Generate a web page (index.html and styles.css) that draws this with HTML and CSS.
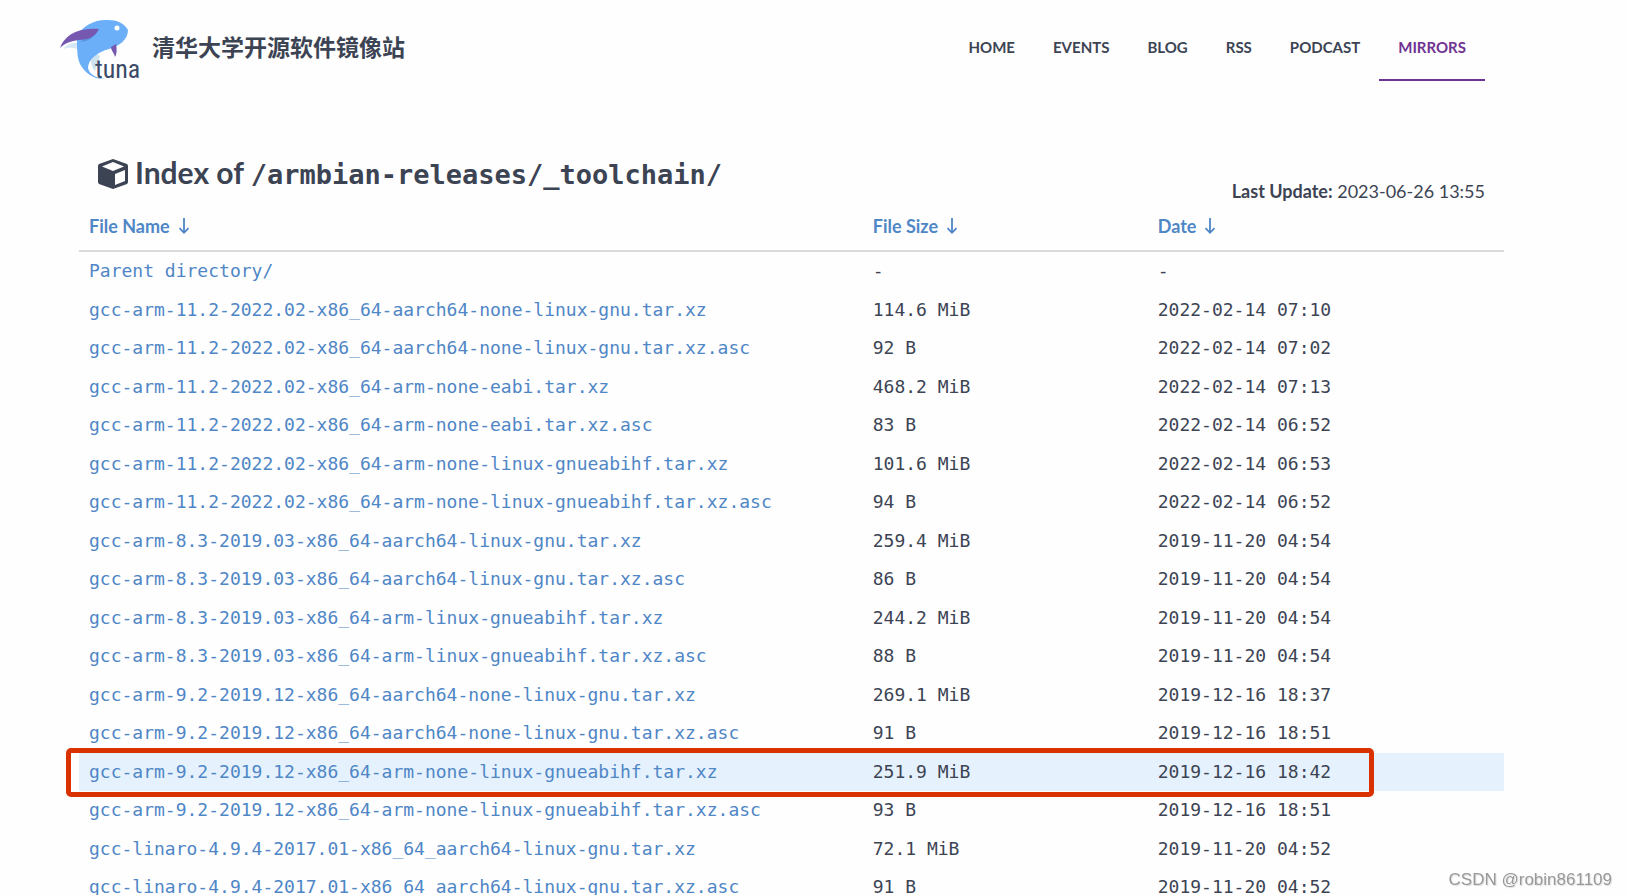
FILE: index.html
```html
<!DOCTYPE html>
<html lang="zh-CN">
<head>
<meta charset="utf-8">
<title>Index of /armbian-releases/_toolchain/</title>
<link rel="stylesheet" href="styles.css">
</head>
<body>
<svg class="defs" aria-hidden="true">
  <symbol id="arrow-down" viewBox="0 0 12 18"><path d="M6 1v14.5M1.5 11.2L6 15.8l4.500-4.600" fill="none" stroke="currentColor" stroke-width="1.800"/></symbol>
</svg>
<header class="site-header">
  <a class="brand" href="#">
    <svg class="logo" viewBox="0 0 84 64" role="img" aria-label="tuna">
      <path d="M3 31C8 25 15 24 20 25L17 31C12 29 7 30 3 31Z" fill="#d5e8f3"/>
      <path d="M33 34C30 40 30 48 35 53L40 38Z" fill="#cfe3ef"/>
      <path d="M17 18C23 7 36 1 48 2C57 2 64 5 68 12C68 22 59 28 49 31C38 34 28 41 28 50C29 55 34 60 46 61C34 62 25 55 20 46C17 39 17 32 17 18Z" fill="#6caff9"/>
      <path d="M20 24C27 24 34 20 39 11L36 12C31 18 24 21 20 24Z" fill="#5a94da"/>
      <path d="M0 30C4 18 17 9 39 11C34 21 27 21 19 22C11 23 5 25 0 30Z" fill="#7658b1"/>
      <path d="M51 29L56 26C57 31 57 36 55 39C54 34 51 33 51 29Z" fill="#7658b1"/>
      <circle cx="57" cy="10" r="2.500" fill="#fff"/>
      <text class="logo-word" x="35" y="60">tuna</text>
    </svg>
    <span class="brand-name">清华大学开源软件镜像站</span>
  </a>
  <nav class="nav">
    <a href="#">HOME</a>
    <a href="#">EVENTS</a>
    <a href="#">BLOG</a>
    <a href="#">RSS</a>
    <a href="#">PODCAST</a>
    <a class="active" href="#">MIRRORS</a>
  </nav>
</header>
<main class="content">
  <div class="title-row">
    <h1 class="title">
      <svg class="cube" viewBox="0 0 32 32" aria-hidden="true"><path fill="#3c4454" fill-rule="evenodd" d="M16 1L30 6Q31 7 31 8V24Q31 25 30 26L16 31L2 26Q1 25 1 24V8Q1 7 2 6ZM16 4L5 8.500L16 13L27 8.500ZM18 16V27L28 23V12Z"/></svg>
      <span>Index of <span class="path">/armbian-releases/_toolchain/</span></span>
    </h1>
    <p class="updated"><strong>Last Update:</strong> 2023-06-26 13:55</p>
  </div>
  <table class="files">
    <thead>
      <tr>
        <th class="col-name"><a href="#">File Name<svg class="arrow" aria-hidden="true"><use href="#arrow-down"/></svg></a></th>
        <th class="col-size"><a href="#">File Size<svg class="arrow" aria-hidden="true"><use href="#arrow-down"/></svg></a></th>
        <th class="col-date"><a href="#">Date<svg class="arrow" aria-hidden="true"><use href="#arrow-down"/></svg></a></th>
      </tr>
    </thead>
    <tbody>
      <tr><td><a href="#">Parent directory/</a></td><td>-</td><td>-</td></tr>
      <tr><td><a href="#">gcc-arm-11.2-2022.02-x86_64-aarch64-none-linux-gnu.tar.xz</a></td><td>114.6 MiB</td><td>2022-02-14 07:10</td></tr>
      <tr><td><a href="#">gcc-arm-11.2-2022.02-x86_64-aarch64-none-linux-gnu.tar.xz.asc</a></td><td>92 B</td><td>2022-02-14 07:02</td></tr>
      <tr><td><a href="#">gcc-arm-11.2-2022.02-x86_64-arm-none-eabi.tar.xz</a></td><td>468.2 MiB</td><td>2022-02-14 07:13</td></tr>
      <tr><td><a href="#">gcc-arm-11.2-2022.02-x86_64-arm-none-eabi.tar.xz.asc</a></td><td>83 B</td><td>2022-02-14 06:52</td></tr>
      <tr><td><a href="#">gcc-arm-11.2-2022.02-x86_64-arm-none-linux-gnueabihf.tar.xz</a></td><td>101.6 MiB</td><td>2022-02-14 06:53</td></tr>
      <tr><td><a href="#">gcc-arm-11.2-2022.02-x86_64-arm-none-linux-gnueabihf.tar.xz.asc</a></td><td>94 B</td><td>2022-02-14 06:52</td></tr>
      <tr><td><a href="#">gcc-arm-8.3-2019.03-x86_64-aarch64-linux-gnu.tar.xz</a></td><td>259.4 MiB</td><td>2019-11-20 04:54</td></tr>
      <tr><td><a href="#">gcc-arm-8.3-2019.03-x86_64-aarch64-linux-gnu.tar.xz.asc</a></td><td>86 B</td><td>2019-11-20 04:54</td></tr>
      <tr><td><a href="#">gcc-arm-8.3-2019.03-x86_64-arm-linux-gnueabihf.tar.xz</a></td><td>244.2 MiB</td><td>2019-11-20 04:54</td></tr>
      <tr><td><a href="#">gcc-arm-8.3-2019.03-x86_64-arm-linux-gnueabihf.tar.xz.asc</a></td><td>88 B</td><td>2019-11-20 04:54</td></tr>
      <tr><td><a href="#">gcc-arm-9.2-2019.12-x86_64-aarch64-none-linux-gnu.tar.xz</a></td><td>269.1 MiB</td><td>2019-12-16 18:37</td></tr>
      <tr><td><a href="#">gcc-arm-9.2-2019.12-x86_64-aarch64-none-linux-gnu.tar.xz.asc</a></td><td>91 B</td><td>2019-12-16 18:51</td></tr>
      <tr class="selected"><td><a href="#">gcc-arm-9.2-2019.12-x86_64-arm-none-linux-gnueabihf.tar.xz</a><span class="marker"></span></td><td>251.9 MiB</td><td>2019-12-16 18:42</td></tr>
      <tr><td><a href="#">gcc-arm-9.2-2019.12-x86_64-arm-none-linux-gnueabihf.tar.xz.asc</a></td><td>93 B</td><td>2019-12-16 18:51</td></tr>
      <tr><td><a href="#">gcc-linaro-4.9.4-2017.01-x86_64_aarch64-linux-gnu.tar.xz</a></td><td>72.1 MiB</td><td>2019-11-20 04:52</td></tr>
      <tr><td><a href="#">gcc-linaro-4.9.4-2017.01-x86_64_aarch64-linux-gnu.tar.xz.asc</a></td><td>91 B</td><td>2019-11-20 04:52</td></tr>
    </tbody>
  </table>
</main>
<div class="watermark">CSDN @robin861109</div>
</body>
</html>
```
FILE: styles.css
```css
* { box-sizing: border-box; }

body {
  margin: 0;
  height: 100vh;
  overflow: hidden;
  background: #fefefe;
  color: #3c4454;
  font-family: Lato, "Noto Sans CJK SC", sans-serif;
  font-size: 18px;
}

a { color: #4f86c6; text-decoration: none; }

.defs { display: none; }

.site-header {
  display: flex;
  justify-content: space-between;
  align-items: flex-start;
  padding: 14px 142px 0 60px;
}

.brand {
  display: flex;
  align-items: center;
  gap: 8px;
  padding-top: 4px;
  color: inherit;
}

.logo { width: 84px; height: 64px; overflow: visible; }

.logo-word {
  font-family: "Roboto Condensed", "Liberation Sans", sans-serif;
  font-size: 26px;
  fill: #3b4a66;
}

.brand-name {
  padding-bottom: 8px;
  font-family: "Noto Sans CJK SC", sans-serif;
  font-size: 23px;
  font-weight: 700;
  line-height: 32px;
}

.nav { display: flex; }

.nav a {
  padding: 2px 19px 0;
  border-bottom: 2px solid transparent;
  color: inherit;
  font-size: 15px;
  font-weight: 700;
  line-height: 63px;
}

.nav a.active { border-color: #6f3391; color: #6f3391; }

.content { padding: 70px 123px 0 79px; }

.title-row {
  display: flex;
  justify-content: space-between;
  align-items: flex-end;
  padding: 0 19px 3px 18px;
}

.title {
  display: flex;
  align-items: center;
  gap: 6px;
  margin: 0;
  padding-bottom: 8px;
  font-size: 30px;
  font-weight: 700;
  line-height: 40px;
}

.cube { width: 32px; height: 32px; }

.path { font-family: "DejaVu Sans Mono", monospace; font-size: 27px; }

.updated { margin: 0; line-height: 24px; }

.files {
  width: 100%;
  table-layout: fixed;
  border-collapse: separate;
  border-spacing: 0;
  text-align: left;
}

.col-name { width: 55%; }
.col-size { width: 20%; }
.col-date { width: 25%; }

.files th {
  padding: 8px 10px 12px;
  border-bottom: 2px solid #dadada;
  line-height: 24px;
}

.files th a { display: flex; align-items: center; gap: 8px; }

.arrow { width: 12px; height: 18px; }

.files td {
  padding: 8px 10px;
  font-family: "DejaVu Sans Mono", monospace;
  line-height: 1.25;
  white-space: nowrap;
}

.selected { position: relative; background: #e5f1fc; }

.marker {
  position: absolute;
  inset: -5px 130px -6px -13px;
  border: 5px solid #d93200;
  border-radius: 5px;
  pointer-events: none;
}

.watermark {
  position: fixed;
  right: 15px;
  bottom: 4px;
  color: #999;
  font-family: "Liberation Sans", sans-serif;
  font-size: 17px;
  line-height: 22px;
  text-shadow: 1px 1px 1px #ddd;
}
```
